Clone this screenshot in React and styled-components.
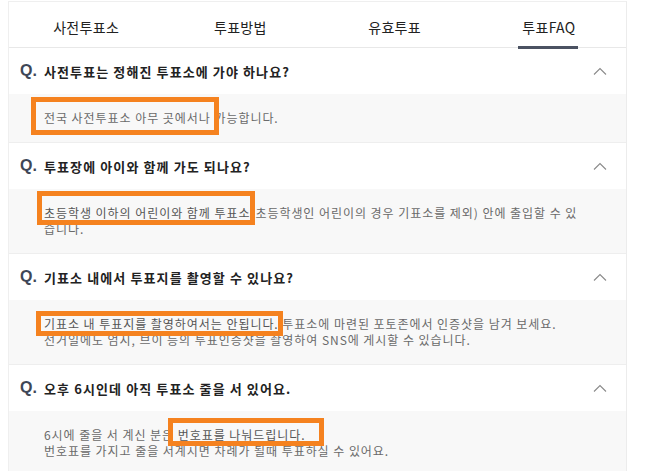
import React from "react";
import styled, { createGlobalStyle } from "styled-components";

const Global = createGlobalStyle`
  html, body { margin: 0; padding: 0; background: #fff; }
  body { font-family: "Noto Sans CJK KR", "Noto Sans", sans-serif; }
`;

const Page = styled.div`
  padding: 1px 0 0 8px;
`;

const Panel = styled.div`
  width: 619px;
  box-sizing: border-box;
  border-top: 1px solid #efefef;
  border-left: 1px solid #efefef;
  border-right: 1px solid #ececec;
  background: #fff;
`;

const Tabs = styled.div`
  display: grid;
  grid-template-columns: repeat(4, 1fr);
  height: 46px;
  border-bottom: 1px solid #e8e8e8;
  box-sizing: border-box;
`;

const Tab = styled.div`
  position: relative;
  display: flex;
  align-items: center;
  justify-content: center;
  padding-top: 4px;
  font-size: 14px;
  letter-spacing: 0.3px;
  color: #222;
  &::after {
    content: "";
    display: ${(p) => (p.$active ? "block" : "none")};
    position: absolute;
    left: 50%;
    bottom: -2px;
    width: 60px;
    margin-left: -31px;
    height: 3px;
    background: #4b5262;
  }
`;

const Question = styled.div`
  display: flex;
  align-items: center;
  height: 46px;
  padding: 0 19px 0 11px;
  box-sizing: border-box;
`;

const QMark = styled.span`
  width: 24px;
  flex: none;
  font-family: "Liberation Sans", Arial, sans-serif;
  font-weight: 700;
  font-size: 16px;
  color: #3e4757;
`;

const QText = styled.span`
  flex: 1;
  font-size: 13px;
  font-weight: 700;
  color: #222;
  letter-spacing: 1.1px;
`;

const Chevron = styled.svg`
  width: 14px;
  height: 8px;
  flex: none;
`;

const Answer = styled.div`
  position: relative;
  background: #f8f8f8;
  padding: 16px 44px 16px 35px;
  font-size: 12px;
  line-height: 16px;
  letter-spacing: 0.95px;
  color: #6a6a6a;
  border-bottom: 1px solid #eeeeee;
`;

const Mark = styled.span`
  color: #555;
  text-decoration: ${(p) => (p.$underline ? "underline" : "none")};
  text-underline-offset: 2px;
`;

const Highlight = styled.div`
  position: absolute;
  border: 5px solid #f5821f;
  box-sizing: border-box;
  pointer-events: none;
`;

const Up = () => (
  <Chevron viewBox="0 0 14 8">
    <polyline points="1,7.5 7,1.5 13,7.5" fill="none" stroke="#8a8a8a" strokeWidth="1.1" />
  </Chevron>
);

const tabs = ["사전투표소", "투표방법", "유효투표", "투표FAQ"];

const items = [
  {
    q: "사전투표는 정해진 투표소에 가야 하나요?",
    a: <>전국 사전투표소 아무 곳에서나 가능합니다.</>,
    box: { left: 22, top: 3, width: 188, height: 38 },
  },
  {
    q: "투표장에 아이와 함께 가도 되나요?",
    a: (
      <>
        <Mark $underline>초등학생 이하의 어린이와 함께 투표소</Mark>(초등학생인 어린이의 경우 기표소를 제외) 안에 출입할 수 있습니다.
      </>
    ),
    box: { left: 28, top: 2, width: 218, height: 34 },
  },
  {
    q: "기표소 내에서 투표지를 촬영할 수 있나요?",
    a: (
      <>
        <Mark $underline>기표소 내 투표지를 촬영하여서는 안됩니다.</Mark> 투표소에 마련된 포토존에서 인증샷을 남겨 보세요.
        <br />
        선거일에도 엄지, 브이 등의 투표인증샷을 촬영하여 SNS에 게시할 수 있습니다.
      </>
    ),
    box: { left: 27, top: 11, width: 247, height: 25 },
  },
  {
    q: "오후 6시인데 아직 투표소 줄을 서 있어요.",
    a: (
      <>
        6시에 줄을 서 계신 분은 <Mark>번호표를 나눠드립니다.</Mark>
        <br />
        번호표를 가지고 줄을 서계시면 차례가 될때 투표하실 수 있어요.
      </>
    ),
    box: { left: 159, top: 7, width: 156, height: 28 },
  },
];

export default function App() {
  return (
    <>
      <Global />
      <Page>
        <Panel>
          <Tabs>
            {tabs.map((t, i) => (
              <Tab key={t} $active={i === 3}>
                {t}
              </Tab>
            ))}
          </Tabs>
          {items.map((it) => (
            <React.Fragment key={it.q}>
              <Question>
                <QMark>Q.</QMark>
                <QText>{it.q}</QText>
                <Up />
              </Question>
              <Answer>
                {it.a}
                <Highlight style={it.box} />
              </Answer>
            </React.Fragment>
          ))}
        </Panel>
      </Page>
    </>
  );
}
